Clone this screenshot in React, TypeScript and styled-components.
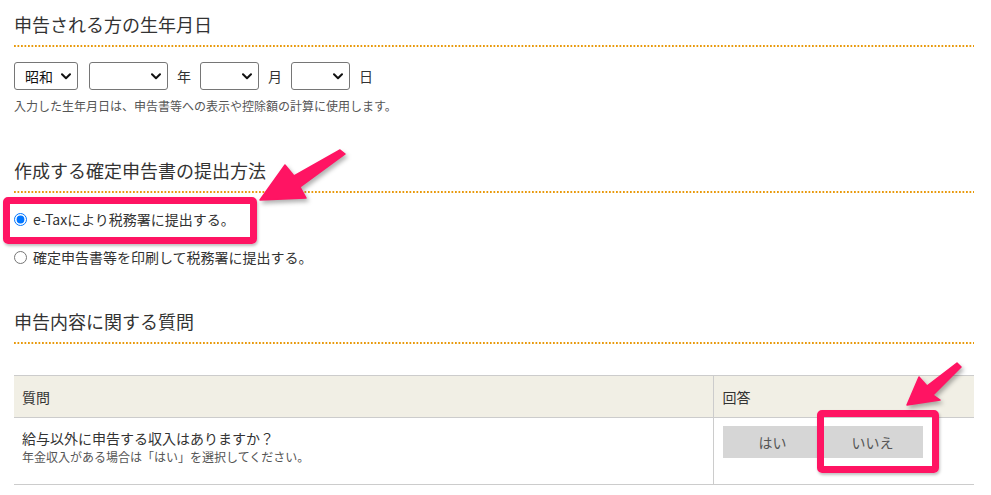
import React from 'react';
import styled, { createGlobalStyle } from 'styled-components';

const GlobalStyle = createGlobalStyle`
  body {
    margin: 0;
    background: #fff;
    color: #333;
    font-family: "Noto Sans CJK JP", "Noto Sans", sans-serif;
  }
`;

const Page = styled.div`
  position: relative;
  width: 960px;
  padding: 11px 17px 0 14px;
`;

const Section = styled.section<{ $gap: number }>`
  margin-top: ${(p) => p.$gap}px;
`;

const Heading = styled.h2`
  margin: 0;
  padding-bottom: 10px;
  font-size: 18px;
  font-weight: normal;
  line-height: 26px;
  color: #333;
  background-image: linear-gradient(to right, #e8990b 2px, transparent 2px);
  background-size: 3.5px 2px;
  background-repeat: repeat-x;
  background-position: left bottom;
`;

const DateRow = styled.div`
  display: flex;
  align-items: center;
  margin-top: 15px;
`;

const SelectWrap = styled.div<{ $w: number }>`
  position: relative;
  width: ${(p) => p.$w}px;
  height: 28px;
  flex: none;
`;

const Select = styled.select`
  appearance: none;
  width: 100%;
  height: 100%;
  box-sizing: border-box;
  padding: 0 0 0 10px;
  border: 1px solid #767676;
  border-radius: 3px;
  background: #fff;
  color: #111;
  font-family: inherit;
  font-size: 14px;
`;

const Chevron = styled.svg`
  position: absolute;
  right: 7px;
  top: 11px;
  pointer-events: none;
`;

const Unit = styled.span`
  margin: 0 9px;
  font-size: 14px;
  color: #333;
`;

const Spacer = styled.span`
  width: 11px;
`;

const Note = styled.p`
  margin: 7px 0 0;
  font-size: 12px;
  line-height: 18px;
  color: #555;
`;

const RadioList = styled.div`
  display: flex;
  flex-direction: column;
  gap: 14px;
  margin-top: 14px;
`;

const RadioRow = styled.label`
  display: flex;
  align-items: center;
  height: 24px;
  font-size: 14px;
  color: #333;

  input {
    width: 13px;
    height: 13px;
    margin: 0 6px 0 0;
    accent-color: #0075ff;
  }
`;

const Table = styled.table`
  width: 960px;
  margin-top: 31px;
  table-layout: fixed;
  border-collapse: collapse;
  font-size: 14px;
`;

const Col = styled.col<{ $w: number }>`
  width: ${(p) => p.$w}px;
`;

const Th = styled.th<{ $divider?: boolean }>`
  height: 41px;
  padding: 0 ${(p) => (p.$divider ? 9 : 8)}px;
  background: #f1efe5;
  border-top: 1px solid #ccc;
  border-bottom: 1px solid #ccc;
  border-left: ${(p) => (p.$divider ? '1px solid #ccc' : 'none')};
  text-align: left;
  font-weight: normal;
  color: #333;
`;

const Td = styled.td<{ $divider?: boolean }>`
  vertical-align: top;
  padding: ${(p) => (p.$divider ? '8px 9px' : '10px 8px 18px')};
  border-bottom: 1px solid #ccc;
  border-left: ${(p) => (p.$divider ? '1px solid #ccc' : 'none')};
`;

const Question = styled.div`
  font-size: 14px;
  line-height: 20px;
  color: #333;
`;

const Hint = styled.div`
  font-size: 12px;
  line-height: 18px;
  color: #555;
`;

const Choices = styled.div`
  display: flex;
`;

const Choice = styled.button`
  width: 100px;
  height: 32px;
  border: none;
  background: #d6d6d6;
  color: #555;
  font-family: inherit;
  font-size: 14px;
  cursor: pointer;
`;

const Highlight = styled.div<{ $x: number; $y: number; $w: number; $h: number }>`
  position: absolute;
  left: ${(p) => p.$x}px;
  top: ${(p) => p.$y}px;
  width: ${(p) => p.$w}px;
  height: ${(p) => p.$h}px;
  box-sizing: border-box;
  border: 7px solid #ff1463;
  border-radius: 5px;
  box-shadow: 1px 2px 3px rgba(0, 0, 0, 0.25);
  pointer-events: none;
`;

const ArrowSvg = styled.svg<{ $x: number; $y: number }>`
  position: absolute;
  left: ${(p) => p.$x}px;
  top: ${(p) => p.$y}px;
  overflow: visible;
  filter: drop-shadow(2px 3px 2px rgba(0, 0, 0, 0.3));
  pointer-events: none;
`;

type ArrowProps = { x: number; y: number; w: number; h: number; points: string };

function Arrow({ x, y, w, h, points }: ArrowProps) {
  return (
    <ArrowSvg $x={x} $y={y} width={w} height={h} viewBox={`0 0 ${w} ${h}`}>
      <polygon points={points} fill="#ff1463" stroke="#ff1463" strokeWidth={1.5} strokeLinejoin="round" />
    </ArrowSvg>
  );
}

function DateSelect({ w, value }: { w: number; value?: string }) {
  return (
    <SelectWrap $w={w}>
      <Select defaultValue={value ?? ''}>
        {value ? <option>{value}</option> : <option value=""></option>}
      </Select>
      <Chevron width="10" height="7" viewBox="0 0 10 7">
        <path d="M1 1.2 L5 5.2 L9 1.2" fill="none" stroke="#111" strokeWidth="2" strokeLinecap="round" strokeLinejoin="round" />
      </Chevron>
    </SelectWrap>
  );
}

export default function App() {
  return (
    <Page>
      <GlobalStyle />
      <Section $gap={0}>
        <Heading>申告される方の生年月日</Heading>
        <DateRow>
          <DateSelect w={64} value="昭和" />
          <Spacer />
          <DateSelect w={79} />
          <Unit>年</Unit>
          <DateSelect w={59} />
          <Unit>月</Unit>
          <DateSelect w={59} />
          <Unit>日</Unit>
        </DateRow>
        <Note>入力した生年月日は、申告書等への表示や控除額の計算に使用します。</Note>
      </Section>

      <Section $gap={42}>
        <Heading>作成する確定申告書の提出方法</Heading>
        <RadioList>
          <RadioRow>
            <input type="radio" name="method" defaultChecked />
            e-Taxにより税務署に提出する。
          </RadioRow>
          <RadioRow>
            <input type="radio" name="method" />
            確定申告書等を印刷して税務署に提出する。
          </RadioRow>
        </RadioList>
      </Section>

      <Section $gap={39}>
        <Heading>申告内容に関する質問</Heading>
        <Table>
          <colgroup>
            <Col $w={699} />
            <Col $w={261} />
          </colgroup>
          <thead>
            <tr>
              <Th>質問</Th>
              <Th $divider>回答</Th>
            </tr>
          </thead>
          <tbody>
            <tr>
              <Td>
                <Question>給与以外に申告する収入はありますか？</Question>
                <Hint>年金収入がある場合は「はい」を選択してください。</Hint>
              </Td>
              <Td $divider>
                <Choices>
                  <Choice>はい</Choice>
                  <Choice>いいえ</Choice>
                </Choices>
              </Td>
            </tr>
          </tbody>
        </Table>
      </Section>

      <Highlight $x={3} $y={197} $w={254} $h={47} />
      <Highlight $x={817} $y={410} $w={122} $h={63} />
      <Arrow x={250} y={145} w={100} h={65} points="10,55 35,20 44,31 90,5 95,9 50,42 56,53" />
      <Arrow x={895} y={355} w={75} h={60} points="12,50 24,22 32,31 62,8 66,12 38,40 45,45" />
    </Page>
  );
}
